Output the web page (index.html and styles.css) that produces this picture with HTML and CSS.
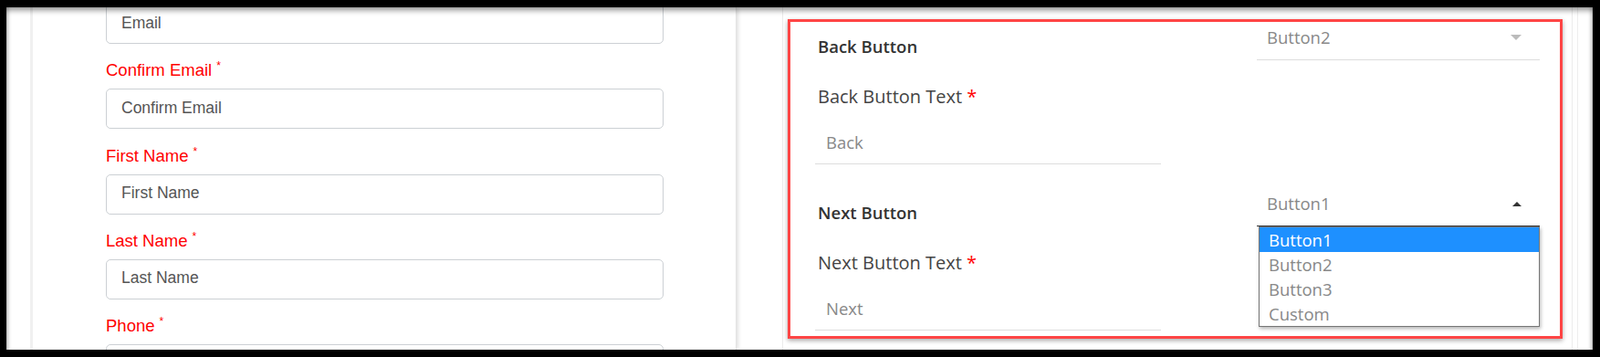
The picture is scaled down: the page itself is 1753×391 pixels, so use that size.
FILE: index.html
```html
<!DOCTYPE html>
<html lang="en">
<head>
  <meta charset="UTF-8">
  <title>Form Settings</title>
  <link rel="stylesheet" href="styles.css">
</head>
<body>

  <div class="frame">
    <div class="gutter"></div>

    <section class="contact-card">
      <div class="field first">
        <input type="text" placeholder="Email">
      </div>
      <div class="field">
        <label>Confirm Email<sup>*</sup></label>
        <input type="text" placeholder="Confirm Email">
      </div>
      <div class="field">
        <label>First Name<sup>*</sup></label>
        <input type="text" placeholder="First Name">
      </div>
      <div class="field">
        <label>Last Name<sup>*</sup></label>
        <input type="text" placeholder="Last Name">
      </div>
      <div class="field">
        <label>Phone<sup>*</sup></label>
        <input type="text" placeholder="Phone">
      </div>
    </section>

    <div class="spacer"></div>

    <section class="settings-card">
      <div class="highlight">

        <div class="nav-block">
          <div class="head-row">
            <h3>Back Button</h3>
            <div class="select">
              <span>Button2</span>
              <i class="caret down"></i>
            </div>
          </div>
          <label>Back Button Text <span class="req">*</span></label>
          <div class="text-field"><input type="text" placeholder="Back"></div>
        </div>

        <div class="nav-block">
          <div class="head-row">
            <h3>Next Button</h3>
            <div class="select open">
              <span>Button1</span>
              <i class="caret up"></i>
              <ul class="options">
                <li class="active">Button1</li>
                <li>Button2</li>
                <li>Button3</li>
                <li>Custom</li>
              </ul>
            </div>
          </div>
          <label>Next Button Text <span class="req">*</span></label>
          <div class="text-field"><input type="text" placeholder="Next"></div>
        </div>

      </div>
    </section>

    <div class="edge"></div>
  </div>

</body>
</html>
```

FILE: styles.css
```css
body {
  margin: 0;
  background: #000;
  height: 391px;
  padding: 8px 8px 8px 7px;
  box-sizing: border-box;
}
.frame {
  display: flex;
  height: 375px;
  background: #fff;
  overflow: hidden;
  position: relative;
}
.frame::after {
  content: "";
  position: absolute;
  inset: 0;
  pointer-events: none;
  box-shadow: inset 0 6px 6px -3px rgba(0,0,0,0.45),
              inset 5px 0 5px -4px rgba(0,0,0,0.3),
              inset -5px 0 5px -4px rgba(0,0,0,0.3);
}
.gutter {
  flex: none;
  width: 26px;
  border-right: 3px solid #f0f0f0;
}

/* left column: contact form */
.contact-card {
  flex: none;
  width: 771px;
  box-sizing: border-box;
  padding-left: 80px;
  border-right: 1px solid #e3e3e3;
  box-shadow: 3px 0 4px -1px rgba(0,0,0,0.12);
  font-family: "Liberation Sans", Arial, sans-serif;
}
.field {
  margin-top: 18.3px;
}
.field.first {
  margin-top: -4px;
}
.field label {
  display: block;
  color: #ff0000;
  font-size: 18.5px;
  line-height: 21px;
  margin-bottom: 10px;
}
.field sup {
  font-size: 12px;
  line-height: 12px;
  vertical-align: top;
  margin-left: 5px;
}
.field input {
  display: block;
  width: 611px;
  height: 44px;
  box-sizing: border-box;
  border: 1px solid #ccd0d4;
  border-radius: 5px;
  padding: 0 16px 2px;
  font-family: "Liberation Sans", Arial, sans-serif;
  font-size: 17.5px;
  color: #555;
  background: #fff;
}
.field input::placeholder {
  color: #555;
  opacity: 1;
}

.spacer {
  flex: none;
  width: 50px;
  border-right: 1px solid #ececec;
}

/* right column: navigation button settings */
.settings-card {
  flex: 1;
  padding: 13px 10px 0 5px;
  font-family: "Open Sans", "Liberation Sans", sans-serif;
}
.highlight {
  height: 350px;
  box-sizing: border-box;
  border: 3px solid #ff4545;
  box-shadow: 0 2px 5px rgba(0,0,0,0.35);
  padding: 1px 22px 6px 27px;
}
.nav-block + .nav-block {
  margin-top: 27px;
}
.head-row {
  display: flex;
  justify-content: space-between;
  align-items: flex-start;
}
.head-row h3 {
  margin: 12px 0 0 3px;
  font-size: 18.5px;
  font-weight: 600;
  line-height: 28px;
  color: #333;
}
.select {
  position: relative;
  width: 310px;
  height: 41px;
  box-sizing: border-box;
  display: flex;
  justify-content: space-between;
  align-items: center;
  padding: 0 20px 8px 11px;
  border-bottom: 1px solid #ddd;
  font-size: 18.5px;
  line-height: 32px;
  color: #888;
}
.select.open {
  border-bottom-color: #333;
}
.caret.down {
  border-left: 6px solid transparent;
  border-right: 6px solid transparent;
  border-top: 6px solid #bbb;
}
.caret.up {
  border-left: 5px solid transparent;
  border-right: 5px solid transparent;
  border-bottom: 5px solid #333;
}
.options {
  position: absolute;
  top: calc(100% + 1px);
  left: 2px;
  right: 0;
  margin: 0;
  padding: 0;
  list-style: none;
  background: #fff;
  border: 1px solid #767676;
  box-shadow: 1px 2px 4px rgba(0,0,0,0.3);
  z-index: 1;
}
.options li {
  line-height: 27px;
  padding-left: 10px;
}
.options li.active {
  background: #1e90ff;
  color: #fff;
}
.nav-block label {
  display: block;
  margin: 26px 0 0 3px;
  font-size: 20px;
  line-height: 28px;
  color: #444;
}
.req {
  color: #ff0000;
}
.text-field input {
  display: block;
  width: 379px;
  height: 60px;
  box-sizing: border-box;
  border: none;
  border-bottom: 1px solid #ddd;
  padding: 19px 12px 8px;
  font-family: "Open Sans", "Liberation Sans", sans-serif;
  font-size: 18.5px;
  color: #888;
  outline: none;
}
.text-field input::placeholder {
  color: #888;
}

.edge {
  flex: none;
  width: 22px;
  border-left: 1px solid #ececec;
  background: linear-gradient(to right, transparent 5px, #eee 5px, #eee 6px, transparent 6px);
}
```
